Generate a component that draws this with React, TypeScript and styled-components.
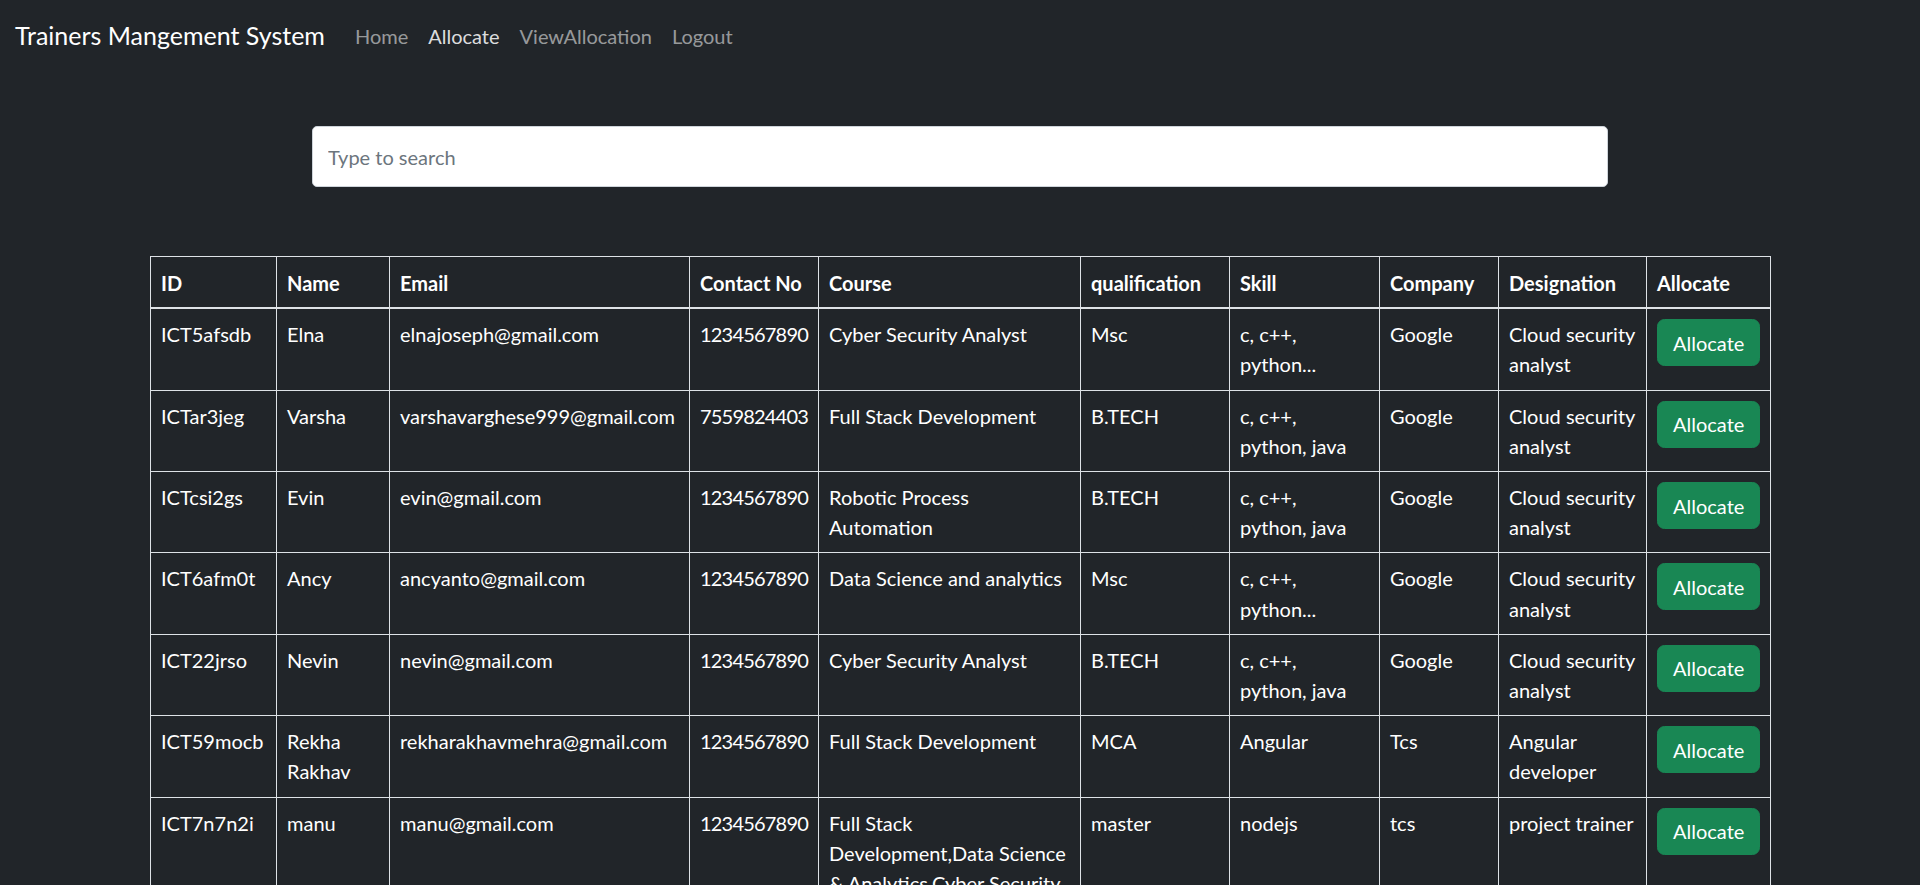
import React from "react";
import styled, { createGlobalStyle } from "styled-components";

const GlobalStyle = createGlobalStyle`
  html { scrollbar-width: none; }
  html::-webkit-scrollbar { display: none; }
  * { box-sizing: border-box; }
  body {
    margin: 0;
    background: #212529;
    color: #fff;
    font-family: Lato, "Liberation Sans", sans-serif;
    font-size: 20px;
    line-height: 30px;
  }
`;

const Navbar = styled.nav`
  display: flex;
  align-items: center;
  padding: 10px 15px;
  background: #212529;
  height: 70px;
`;

const Brand = styled.a`
  font-size: 25px;
  line-height: 37.5px;
  padding: 7px 0 5.5px;
  margin-right: 20px;
  color: #fff;
  text-decoration: none;
  white-space: nowrap;
`;

const NavList = styled.ul`
  display: flex;
  list-style: none;
  margin: 0;
  padding: 0;
`;

const NavLink = styled.a<{ $active?: boolean }>`
  display: block;
  padding: 11px 10px 9px;
  font-size: 20px;
  line-height: 30px;
  text-decoration: none;
  color: ${p => (p.$active ? "rgba(255,255,255,0.86)" : "rgba(255,255,255,0.55)")};
`;

const Container = styled.main`
  width: 1620px;
  margin: 0 auto;
`;

const SearchRow = styled.div`
  display: flex;
  justify-content: center;
  margin-top: 56px;
`;

const SearchInput = styled.input`
  width: 80%;
  height: 61px;
  padding: 0 15px;
  font-family: inherit;
  font-size: 20px;
  color: #212529;
  background: #fff;
  border: 1px solid #ced4da;
  border-radius: 5px;
  outline: none;
  &::placeholder { color: #6c757d; }
`;

const Table = styled.table`
  width: 1620px;
  margin-top: 69px;
  border-collapse: collapse;
  table-layout: fixed;
  color: #fff;
  background: #212529;
`;

const HeadCell = styled.th`
  text-align: left;
  vertical-align: bottom;
  font-weight: 700;
  padding: 11px 10px 9px;
  line-height: 30.2px;
  border: 1px solid #dee2e6;
  border-bottom: 2px solid #dee2e6;
  white-space: nowrap;
`;

const Cell = styled.td<{ $tight?: boolean }>`
  vertical-align: top;
  padding: 10px;
  line-height: 30.2px;
  border: 1px solid #dee2e6;
  letter-spacing: ${p => (p.$tight ? "-0.8px" : "normal")};
`;

const SkillText = styled.div`
  max-width: 116px;
`;

const AllocateButton = styled.button`
  font-family: inherit;
  font-size: 20px;
  line-height: 30px;
  padding: 7.5px 15px;
  color: #fff;
  background: #198754;
  border: 1px solid #198754;
  border-radius: 7.5px;
  cursor: pointer;
`;

const columns: [string, number][] = [
  ["ID", 126],
  ["Name", 113],
  ["Email", 300],
  ["Contact No", 129],
  ["Course", 262],
  ["qualification", 149],
  ["Skill", 150],
  ["Company", 119],
  ["Designation", 148],
  ["Allocate", 124],
];

type Trainer = {
  id: string;
  name: string;
  email: string;
  phone: string;
  course: string;
  qualification: string;
  skill: string;
  company: string;
  designation: string;
};

const trainers: Trainer[] = [
  { id: "ICT5afsdb", name: "Elna", email: "elnajoseph@gmail.com", phone: "1234567890", course: "Cyber Security Analyst", qualification: "Msc", skill: "c, c++, python...", company: "Google", designation: "Cloud security analyst" },
  { id: "ICTar3jeg", name: "Varsha", email: "varshavarghese999@gmail.com", phone: "7559824403", course: "Full Stack Development", qualification: "B.TECH", skill: "c, c++, python, java", company: "Google", designation: "Cloud security analyst" },
  { id: "ICTcsi2gs", name: "Evin", email: "evin@gmail.com", phone: "1234567890", course: "Robotic Process Automation", qualification: "B.TECH", skill: "c, c++, python, java", company: "Google", designation: "Cloud security analyst" },
  { id: "ICT6afm0t", name: "Ancy", email: "ancyanto@gmail.com", phone: "1234567890", course: "Data Science and analytics", qualification: "Msc", skill: "c, c++, python...", company: "Google", designation: "Cloud security analyst" },
  { id: "ICT22jrso", name: "Nevin", email: "nevin@gmail.com", phone: "1234567890", course: "Cyber Security Analyst", qualification: "B.TECH", skill: "c, c++, python, java", company: "Google", designation: "Cloud security analyst" },
  { id: "ICT59mocb", name: "Rekha Rakhav", email: "rekharakhavmehra@gmail.com", phone: "1234567890", course: "Full Stack Development", qualification: "MCA", skill: "Angular", company: "Tcs", designation: "Angular developer" },
  { id: "ICT7n7n2i", name: "manu", email: "manu@gmail.com", phone: "1234567890", course: "Full Stack Development,Data Science & Analytics,Cyber Security Analyst", qualification: "master", skill: "nodejs", company: "tcs", designation: "project trainer" },
];

export default function App() {
  return (
    <>
      <GlobalStyle />
      <Navbar>
        <Brand href="#">Trainers Mangement System</Brand>
        <NavList>
          <li><NavLink href="#">Home</NavLink></li>
          <li><NavLink href="#" $active>Allocate</NavLink></li>
          <li><NavLink href="#">ViewAllocation</NavLink></li>
          <li><NavLink href="#">Logout</NavLink></li>
        </NavList>
      </Navbar>
      <Container>
        <SearchRow>
          <SearchInput type="text" placeholder="Type to search" />
        </SearchRow>
        <Table>
          <colgroup>
            {columns.map(([name, w]) => <col key={name} style={{ width: w }} />)}
          </colgroup>
          <thead>
            <tr>
              {columns.map(([name]) => <HeadCell key={name}>{name}</HeadCell>)}
            </tr>
          </thead>
          <tbody>
            {trainers.map(t => (
              <tr key={t.id}>
                <Cell>{t.id}</Cell>
                <Cell>{t.name}</Cell>
                <Cell>{t.email}</Cell>
                <Cell $tight>{t.phone}</Cell>
                <Cell>{t.course}</Cell>
                <Cell>{t.qualification}</Cell>
                <Cell><SkillText>{t.skill}</SkillText></Cell>
                <Cell>{t.company}</Cell>
                <Cell>{t.designation}</Cell>
                <Cell><AllocateButton>Allocate</AllocateButton></Cell>
              </tr>
            ))}
          </tbody>
        </Table>
      </Container>
    </>
  );
}
